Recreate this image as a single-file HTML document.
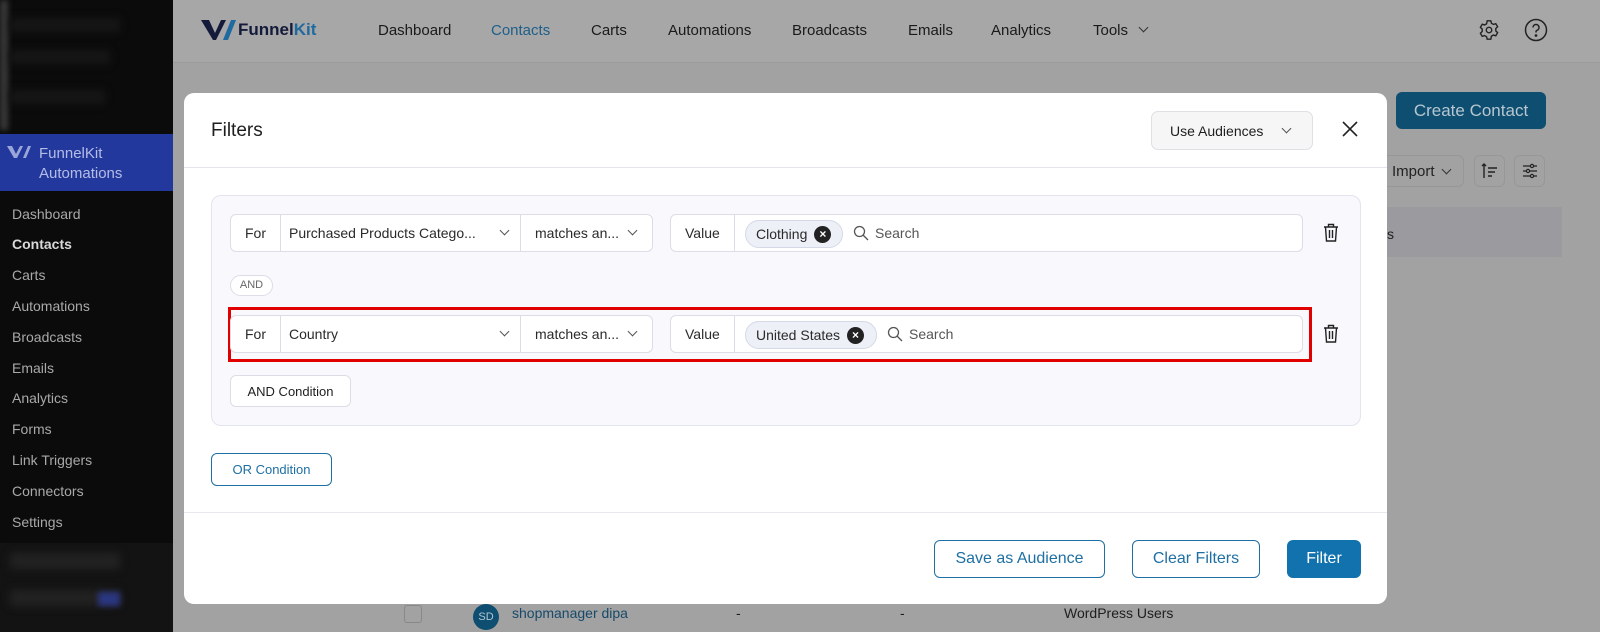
<!DOCTYPE html>
<html><head><meta charset="utf-8"><style>
*{box-sizing:border-box;margin:0;padding:0}
body{width:1600px;height:632px;overflow:hidden;font-family:"Liberation Sans",sans-serif;background:#a2a2a2;position:relative;color:#1e1e1e}
.abs{position:absolute}
#side{left:0;top:0;width:173px;height:632px;background:#0b0b0b}
#side .blur{background:#161616;filter:blur(4px)}
#side .menu div{position:absolute;left:12px;font-size:14px;color:#a9a9a9}
#top{left:173px;top:0;width:1427px;height:63px;background:#a7a7a7;border-bottom:1px solid #9c9c9c}
.nav{position:absolute;top:22px;font-size:15px;color:#1a1a1a}
#modal{left:184px;top:93px;width:1203px;height:511px;background:#fff;border-radius:10px;overflow:hidden}
.box{position:absolute;background:#fff;border:1px solid #dcdde6;border-radius:6px;font-size:14px;color:#2a2a2a}
.seg{position:absolute;top:0;height:100%;display:flex;align-items:center;padding-left:14px;border-right:1px solid #dcdde6}
.chev{position:absolute;width:7px;height:7px;border-right:1.2px solid #555;border-bottom:1.2px solid #555;transform:rotate(45deg)}
.chip{position:absolute;top:5px;height:28px;background:#eef0f8;border:1px solid #d5d8e6;border-radius:14px;display:flex;align-items:center;padding-left:10px;font-size:14px}
.x{display:inline-block;width:17px;height:17px;border-radius:50%;background:#222;color:#fff;font-size:12px;font-weight:bold;text-align:center;line-height:17px;margin-left:7px}
.btn{position:absolute;border-radius:6px;font-size:16px;display:flex;align-items:center;justify-content:center}
</style></head><body>
<div id="side" class="abs">
 <div class="abs" style="left:0;top:0;width:8px;height:130px;background:#3a3a3a;filter:blur(3px)"></div>
 <div class="abs blur" style="left:10px;top:18px;width:110px;height:14px"></div>
 <div class="abs blur" style="left:10px;top:50px;width:100px;height:14px"></div>
 <div class="abs blur" style="left:10px;top:90px;width:95px;height:14px"></div>
 <div class="abs" style="left:0;top:134px;width:173px;height:57px;background:#23389c"></div>
 <svg class="abs" style="left:7px;top:146px" width="24" height="12" viewBox="0 0 24 12"><path d="M0 0h5l4 8 4-8h3L10 12H7z M16 12L21 0h3l-5 12z" fill="#9aa6d8"/></svg>
 <div class="abs" style="left:39px;top:144px;font-size:15px;color:#b4bde6;line-height:20px">FunnelKit<br>Automations</div>
 <div class="menu">
  <div style="top:206px">Dashboard</div>
  <div style="top:236px;color:#d8d8d8;font-weight:bold">Contacts</div>
  <div style="top:267px">Carts</div>
  <div style="top:298px">Automations</div>
  <div style="top:329px">Broadcasts</div>
  <div style="top:360px">Emails</div>
  <div style="top:390px">Analytics</div>
  <div style="top:421px">Forms</div>
  <div style="top:452px">Link Triggers</div>
  <div style="top:483px">Connectors</div>
  <div style="top:514px">Settings</div>
 </div>
 <div class="abs" style="left:0;top:543px;width:173px;height:89px;background:#131313"></div>
 <div class="abs blur" style="left:10px;top:553px;width:110px;height:16px;background:#222"></div>
 <div class="abs blur" style="left:10px;top:590px;width:110px;height:16px;background:#222"></div>
 <div class="abs" style="left:98px;top:592px;width:22px;height:14px;background:#2a3680;filter:blur(3px)"></div>
</div>
<div id="top" class="abs">
 <svg class="abs" style="left:28px;top:18px" width="36" height="24" viewBox="0 0 36 24"><path d="M0 2h8l6 13 6-13h5L15 22h-3z" fill="#141a3a"/><path d="M22 22L30 2h5l-8 20z" fill="#1e6aa0"/></svg>
 <div class="abs" style="left:65px;top:20px;font-size:17px;font-weight:bold;color:#141a3a">Funnel<span style="color:#1e6aa0">Kit</span></div>
 <div class="nav" style="left:205px">Dashboard</div>
 <div class="nav" style="left:318px;color:#1e5f8a">Contacts</div>
 <div class="nav" style="left:418px">Carts</div>
 <div class="nav" style="left:495px">Automations</div>
 <div class="nav" style="left:619px">Broadcasts</div>
 <div class="nav" style="left:735px">Emails</div>
 <div class="nav" style="left:818px">Analytics</div>
 <div class="nav" style="left:920px">Tools</div>
 <div class="chev" style="left:967px;top:24px;border-color:#333"></div>
 <svg class="abs" style="left:1305px;top:19px" width="22" height="22" viewBox="0 0 24 24" fill="none" stroke="#222" stroke-width="1.5"><circle cx="12" cy="12" r="3"/><path d="M10 2h4l.6 2.6 2.2 1.3 2.6-.8 2 3.4-2 1.9v2.6l2 1.9-2 3.4-2.6-.8-2.2 1.3L14 22h-4l-.6-2.6-2.2-1.3-2.6.8-2-3.4 2-1.9v-2.6l-2-1.9 2-3.4 2.6.8 2.2-1.3z"/></svg>
 <svg class="abs" style="left:1351px;top:18px" width="24" height="24" viewBox="0 0 24 24" fill="none" stroke="#222" stroke-width="1.5"><circle cx="12" cy="12" r="10.5"/><path d="M9 9.5a3 3 0 1 1 4 2.8c-.7.3-1 .8-1 1.5v.7"/><circle cx="12" cy="17.5" r=".6" fill="#222"/></svg>
</div>
<div class="abs" style="left:1396px;top:92px;width:150px;height:37px;background:#0e4e70;border-radius:6px;color:#b7c6d0;font-size:17px;display:flex;align-items:center;justify-content:center">Create Contact</div>
<div class="abs" style="left:1380px;top:155px;width:84px;height:32px;border:1px solid #979797;border-radius:6px;font-size:15px;padding:7px 0 0 11px;color:#222">Import</div>
<div class="chev" style="left:1443px;top:166px;border-color:#333"></div>
<div class="abs" style="left:1474px;top:155px;width:31px;height:32px;border:1px solid #979797;border-radius:6px"></div>
<svg class="abs" style="left:1481px;top:162px" width="18" height="18" viewBox="0 0 18 18" fill="none" stroke="#222" stroke-width="1.4"><path d="M3 16V2M1 4l2-2 2 2M7 6h9M7 10h7M7 14h4"/></svg>
<div class="abs" style="left:1514px;top:155px;width:31px;height:32px;border:1px solid #979797;border-radius:6px"></div>
<svg class="abs" style="left:1521px;top:162px" width="18" height="18" viewBox="0 0 18 18" fill="none" stroke="#222" stroke-width="1.2"><path d="M2 4h14M2 9h14M2 14h14"/><circle cx="11" cy="4" r="1.6" fill="#a2a2a2"/><circle cx="7" cy="9" r="1.6" fill="#a2a2a2"/><circle cx="11" cy="14" r="1.6" fill="#a2a2a2"/></svg>
<div class="abs" style="left:1387px;top:207px;width:175px;height:50px;background:#9a9a9f"></div>
<div class="abs" style="left:1387px;top:226px;font-size:14px">s</div>
<div class="abs" style="left:404px;top:605px;width:18px;height:18px;border:1px solid #888;border-radius:3px"></div>
<div class="abs" style="left:473px;top:604px;width:26px;height:26px;border-radius:50%;background:#0e4e70;color:#b7c6d0;font-size:11px;text-align:center;line-height:26px">SD</div>
<div class="abs" style="left:512px;top:605px;font-size:14px;color:#174a6a">shopmanager dipa</div>
<div class="abs" style="left:1064px;top:605px;font-size:14px">WordPress Users</div>
<div class="abs" style="left:736px;top:605px;font-size:14px">-</div>
<div class="abs" style="left:900px;top:605px;font-size:14px">-</div>

<div id="modal" class="abs">
 <div class="abs" style="left:27px;top:27px;font-size:19px;color:#1e1e1e">Filters</div>
 <div class="abs" style="left:967px;top:18px;width:162px;height:39px;background:#f6f6f7;border:1px solid #e0e0e4;border-radius:7px;font-size:14px;padding:11px 0 0 18px">Use Audiences</div>
 <div class="chev" style="left:1099px;top:32px"></div>
 <svg class="abs" style="left:1158px;top:28px" width="16" height="16" viewBox="0 0 16 16"><path d="M1 1L15 15M15 1L1 15" stroke="#222" stroke-width="1.6"/></svg>
 <div class="abs" style="left:0;top:74px;width:1203px;height:1px;background:#e3e4ec"></div>
 <div class="abs" style="left:27px;top:102px;width:1150px;height:231px;background:#f8f8fd;border:1px solid #e2e4ee;border-radius:10px"></div>
 <div class="box" style="left:46px;top:121px;width:423px;height:38px">
  <div class="seg" style="left:0;width:50px">For</div>
  <div class="seg" style="left:50px;width:240px;padding-left:8px">Purchased Products Catego...</div>
  <div class="chev" style="left:270px;top:12px"></div>
  <div class="seg" style="left:290px;width:132px;border:none;padding-left:14px">matches an...</div>
  <div class="chev" style="left:398px;top:12px"></div>
 </div>
 <div class="box" style="left:486px;top:121px;width:633px;height:38px">
  <div class="seg" style="left:0;width:64px">Value</div>
  <div class="chip" style="left:74px;width:98px">Clothing<span class="x">×</span></div>
  <svg class="abs" style="left:182px;top:10px" width="16" height="16" viewBox="0 0 16 16" fill="none" stroke="#555" stroke-width="1.3"><circle cx="6.5" cy="6.5" r="5"/><path d="M10 10l5 5"/></svg>
  <div class="abs" style="left:204px;top:10px;color:#555">Search</div>
 </div>
 <svg class="abs" style="left:1139px;top:130px" width="16" height="19" viewBox="0 0 16 19" fill="none" stroke="#222" stroke-width="1.4"><path d="M1 4h14M5.5 4V1.5h5V4M2.5 4l1 14h9l1-14M6.5 7v8M9.5 7v8"/></svg>
 <div class="abs" style="left:46px;top:182px;width:43px;height:21px;background:#fff;border:1px solid #dcdde6;border-radius:11px;font-size:11px;color:#666;text-align:center;line-height:19px">AND</div>
 <div class="abs" style="left:44px;top:214px;width:1084px;height:55px;border:3px solid #e00000"></div>
 <div class="box" style="left:46px;top:222px;width:423px;height:38px">
  <div class="seg" style="left:0;width:50px">For</div>
  <div class="seg" style="left:50px;width:240px;padding-left:8px">Country</div>
  <div class="chev" style="left:270px;top:12px"></div>
  <div class="seg" style="left:290px;width:132px;border:none;padding-left:14px">matches an...</div>
  <div class="chev" style="left:398px;top:12px"></div>
 </div>
 <div class="box" style="left:486px;top:222px;width:633px;height:38px">
  <div class="seg" style="left:0;width:64px">Value</div>
  <div class="chip" style="left:74px;width:132px">United States<span class="x">×</span></div>
  <svg class="abs" style="left:216px;top:10px" width="16" height="16" viewBox="0 0 16 16" fill="none" stroke="#555" stroke-width="1.3"><circle cx="6.5" cy="6.5" r="5"/><path d="M10 10l5 5"/></svg>
  <div class="abs" style="left:238px;top:10px;color:#555">Search</div>
 </div>
 <svg class="abs" style="left:1139px;top:231px" width="16" height="19" viewBox="0 0 16 19" fill="none" stroke="#222" stroke-width="1.4"><path d="M1 4h14M5.5 4V1.5h5V4M2.5 4l1 14h9l1-14M6.5 7v8M9.5 7v8"/></svg>
 <div class="btn" style="left:46px;top:282px;width:121px;height:32px;background:#fff;border:1px solid #dcdde6;font-size:13px;color:#1e1e1e">AND Condition</div>
 <div class="btn" style="left:27px;top:360px;width:121px;height:33px;background:#fff;border:1.3px solid #1e6fa3;font-size:13px;color:#1e6fa3">OR Condition</div>
 <div class="abs" style="left:0;top:419px;width:1203px;height:1px;background:#e8e8ee"></div>
 <div class="btn" style="left:750px;top:447px;width:171px;height:38px;border:1.3px solid #1e6fa3;color:#1e6fa3">Save as Audience</div>
 <div class="btn" style="left:948px;top:447px;width:128px;height:38px;border:1.3px solid #1e6fa3;color:#1e6fa3">Clear Filters</div>
 <div class="btn" style="left:1103px;top:447px;width:74px;height:38px;background:#1272ad;color:#fff">Filter</div>
</div>
</body></html>
